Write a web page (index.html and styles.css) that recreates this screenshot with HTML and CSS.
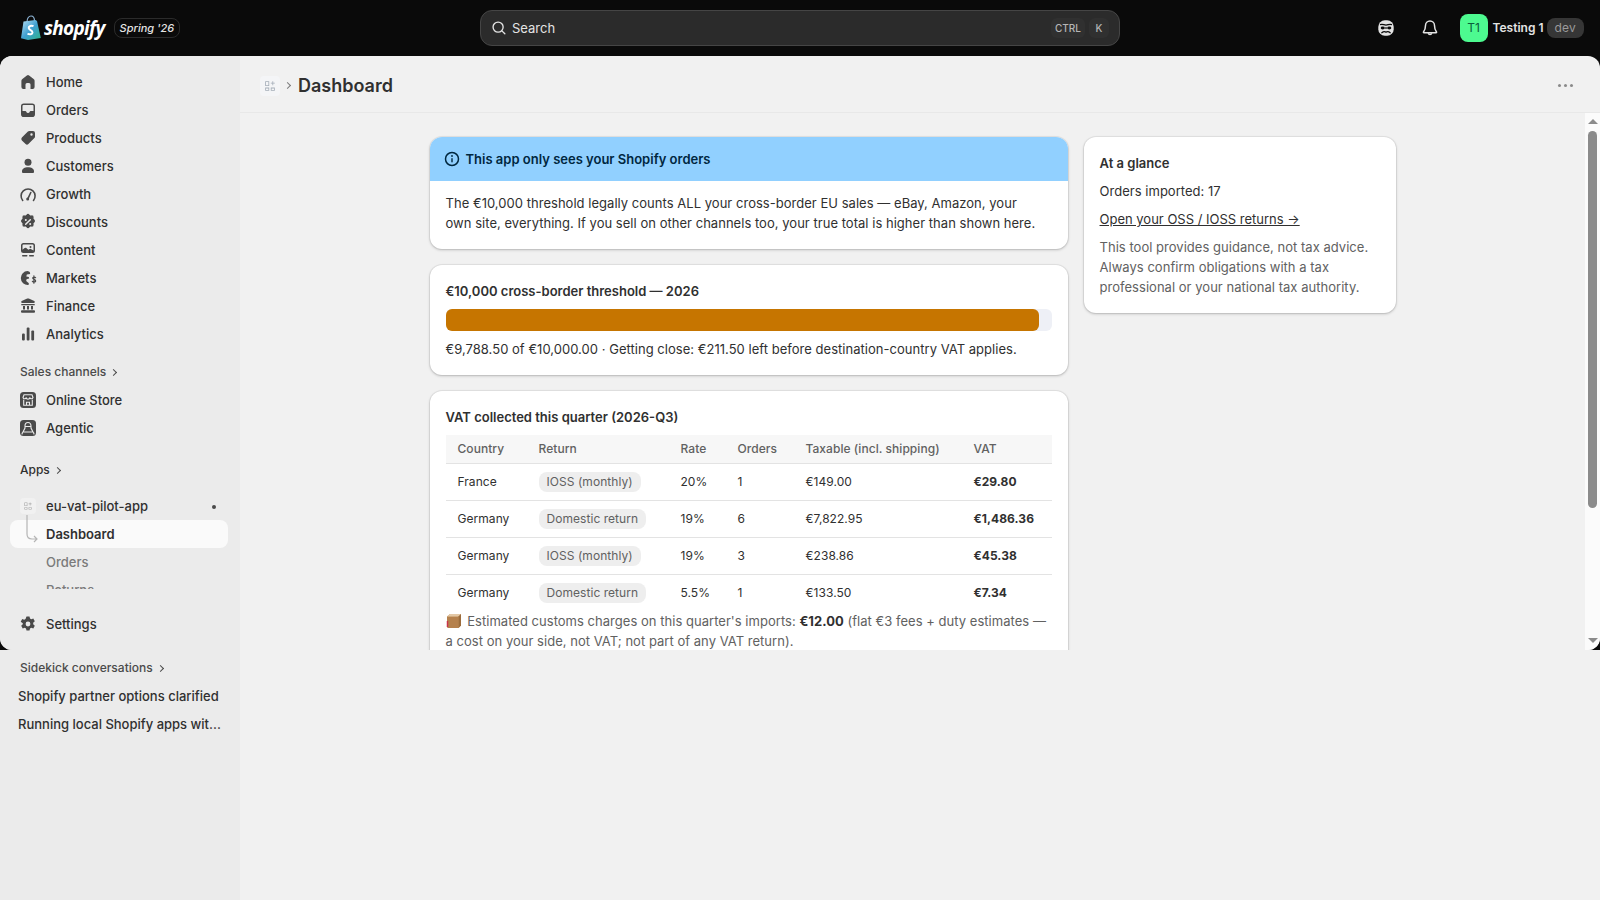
FILE: index.html
```html
<!DOCTYPE html>
<html lang="en">
<head>
    <meta charset="UTF-8">
    <meta name="viewport" content="width=device-width, initial-scale=1.0">
    <title>Dashboard - eu-vat-pilot-app</title>
    <link rel="stylesheet" href="styles.css">
</head>
<body>
    <div class="upper">
        <header class="topbar">
            <div class="brand">
                <svg class="bag" viewBox="0 0 22 26" width="22" height="26">
                    <defs>
                        <linearGradient id="bagFill" x1="0" y1="0" x2="1" y2="1">
                            <stop offset="0" stop-color="#b9e0f5"/>
                            <stop offset="0.5" stop-color="#3f9fd0"/>
                            <stop offset="1" stop-color="#2fb58a"/>
                        </linearGradient>
                    </defs>
                    <path d="M7 7C7 3 9 1 11 1s3.500 2 3.500 5" fill="none" stroke="#8fb6d8" stroke-width="1.200"/>
                    <path d="M3.500 6.500 15.500 5 17 6l3.800 17L8 25 1 23.300Z" fill="url(#bagFill)"/>
                    <path d="M13.500 11.200C11.500 10.300 8.500 11 8.700 13c.2 2 3.800 2.200 3.800 4.400 0 2-2.800 2.400-5 1.200" fill="none" stroke="#fff" stroke-width="2"/>
                </svg>
                <span class="wordmark">shopify</span>
                <span class="edition">Spring '26</span>
            </div>
            <div class="search">
                <svg viewBox="0 0 20 20" width="18" height="18"><circle cx="9" cy="9" r="5.600" fill="none" stroke="#e3e3e3" stroke-width="1.500"/><path d="m13.200 13.200 3.300 3.300" stroke="#e3e3e3" stroke-width="1.500" stroke-linecap="round"/></svg>
                <span class="search-label">Search</span>
                <kbd class="key key-wide">CTRL</kbd>
                <kbd class="key">K</kbd>
            </div>
            <div class="top-actions">
                <svg class="top-icon" viewBox="0 0 20 20" width="20" height="20">
                    <rect x="2.300" y="2.300" width="15.400" height="15.400" rx="6.500" fill="#e3e3e3"/>
                    <path d="M4.500 6.600c2-.9 3.500.6 5.500.6s3.500-1.500 5.500-.6" fill="none" stroke="#0a0a0a" stroke-width="1.300" stroke-linecap="round"/>
                    <ellipse cx="6.700" cy="10" rx="2" ry="1.400" fill="#0a0a0a"/>
                    <ellipse cx="13.300" cy="10" rx="2" ry="1.400" fill="#0a0a0a"/>
                    <path d="M8.500 10h3" stroke="#0a0a0a" stroke-width="1.200"/>
                    <path d="M5.800 14.700c1.800-1.500 3-1.300 4.200-.6 1.200-.7 2.400-.9 4.200.6" fill="none" stroke="#0a0a0a" stroke-width="1.300" stroke-linecap="round"/>
                </svg>
                <svg class="top-icon bell" viewBox="0 0 20 20" width="20" height="20">
                    <path d="M10 3a4.500 4.500 0 0 0-4.500 4.500c0 3.200-.6 4.700-2 6.400-.3.400 0 .9.400.9h12.200c.4 0 .7-.5.4-.9-1.400-1.700-2-3.200-2-6.400A4.500 4.500 0 0 0 10 3Z" fill="none" stroke="#e3e3e3" stroke-width="1.500" stroke-linejoin="round"/>
                    <path d="M8.200 15.200a1.900 1.900 0 0 0 3.600 0" fill="none" stroke="#e3e3e3" stroke-width="1.500"/>
                </svg>
                <span class="avatar">T1</span>
                <span class="store-name">Testing 1</span>
                <span class="dev-tag">dev</span>
            </div>
        </header>

        <div class="frame">
            <nav class="sidebar">
                <div class="nav-scroll">
                    <a class="nav-item" href="#">
                        <svg viewBox="0 0 20 20"><path d="M8.900 3.400 4.400 6.900a2.500 2.500 0 0 0-1 1.900V15a2 2 0 0 0 2 2h2.100v-4.500A1.500 1.500 0 0 1 9 11h2a1.500 1.500 0 0 1 1.500 1.500V17h2.100a2 2 0 0 0 2-2V8.800a2.500 2.500 0 0 0-1-1.900l-4.500-3.500a1.800 1.800 0 0 0-2.200 0Z"/></svg>
                        Home
                    </a>
                    <a class="nav-item" href="#">
                        <svg viewBox="0 0 20 20"><path fill-rule="evenodd" d="M5.800 3.500h8.400A2.800 2.800 0 0 1 17 6.300v7.900a2.800 2.800 0 0 1-2.800 2.800H5.800A2.800 2.800 0 0 1 3 14.200V6.300a2.800 2.800 0 0 1 2.800-2.800ZM5.500 5a1 1 0 0 0-1 1v5h2.800a1 1 0 0 1 1 .8 1.800 1.800 0 0 0 3.400 0 1 1 0 0 1 1-.8h2.800V6a1 1 0 0 0-1-1h-9Z"/></svg>
                        Orders
                    </a>
                    <a class="nav-item" href="#">
                        <svg viewBox="0 0 20 20"><path fill-rule="evenodd" d="M11.300 3H15a2 2 0 0 1 2 2v3.700a2 2 0 0 1-.6 1.400l-6 6a2 2 0 0 1-2.800 0l-3.700-3.700a2 2 0 0 1 0-2.800l6-6A2 2 0 0 1 11.300 3Zm2.200 2.300a1.200 1.200 0 1 0 0 2.400 1.200 1.200 0 0 0 0-2.400Z"/></svg>
                        Products
                    </a>
                    <a class="nav-item" href="#">
                        <svg viewBox="0 0 20 20"><circle cx="10" cy="6.200" r="3.500"/><path d="M4 15.300c0-2.500 2.600-4 6-4s6 1.500 6 4v.7a1 1 0 0 1-1 1H5a1 1 0 0 1-1-1Z"/></svg>
                        Customers
                    </a>
                    <a class="nav-item" href="#">
                        <svg viewBox="0 0 20 20"><path class="line" d="M4.700 16.500a7 7 0 1 1 10.800 0"/><path class="line" d="m9.800 14.800 3-6.300"/><circle cx="9.700" cy="15" r="1.500"/></svg>
                        Growth
                    </a>
                    <a class="nav-item" href="#">
                        <svg viewBox="0 0 20 20"><path d="M8.500 2.700a2 2 0 0 1 3 0l.8.800 1.100-.1a2 2 0 0 1 2.200 2.200l-.1 1.100.8.800a2 2 0 0 1 0 3l-.8.800.1 1.100a2 2 0 0 1-2.200 2.200l-1.100-.1-.8.800a2 2 0 0 1-3 0l-.8-.8-1.100.1a2 2 0 0 1-2.200-2.200l.1-1.100-.8-.8a2 2 0 0 1 0-3l.8-.8-.1-1.100a2 2 0 0 1 2.200-2.200l1.100.1Z"/><path class="cut" d="m7.700 12.300 4.600-4.600"/><circle class="hole" cx="7.800" cy="8" r="1"/><circle class="hole" cx="12.200" cy="12" r="1"/></svg>
                        Discounts
                    </a>
                    <a class="nav-item" href="#">
                        <svg viewBox="0 0 20 20"><path fill-rule="evenodd" d="M5.500 3h9A2.500 2.500 0 0 1 17 5.500v5a2.500 2.500 0 0 1-2.500 2.500h-9A2.500 2.500 0 0 1 3 10.500v-5A2.500 2.500 0 0 1 5.500 3Zm-1 6.800c1.500-1.600 2.800-2.400 3.500-2l2.300 2 2-1 3.200 1.800V5.500a1 1 0 0 0-1-1h-9a1 1 0 0 0-1 1Zm8-3.800a1 1 0 1 0 0 2 1 1 0 0 0 0-2Z"/><rect x="4" y="15" width="5.500" height="1.500" rx=".7"/><rect x="11" y="15" width="5" height="1.500" rx=".7"/></svg>
                        Content
                    </a>
                    <a class="nav-item" href="#">
                        <svg viewBox="0 0 20 20"><path d="M9.500 3a7 7 0 0 0-6.700 7 7 7 0 0 0 7.700 7l.4-1.400c-.6-1.200-1.800-1.400-2.400-2.300-.6-1-.2-2 .7-2.300l2-.6-.4-1.400-2.500-.6.500-2 3.300-.5c.1-1.400-.2-2.400-2.600-2.900Z"/><path class="line thin" d="M17.600 9.700c-.5-.8-2.800-1-2.900.4-.1 1.500 3 1.100 3 2.800 0 1.400-2.500 1.300-3.300.4M15.900 7.800v7.400"/></svg>
                        Markets
                    </a>
                    <a class="nav-item" href="#">
                        <svg viewBox="0 0 20 20"><path d="M9.200 2.600a2 2 0 0 1 1.600 0l5.500 2.400c.8.400.6 2-.4 2H4.100c-1 0-1.200-1.600-.4-2Z"/><rect x="3.200" y="8" width="13.600" height="1.300" rx=".4"/><rect x="5" y="10" width="2" height="3.500"/><rect x="9" y="10" width="2" height="3.500"/><rect x="13" y="10" width="2" height="3.500"/><rect x="3" y="14.200" width="14" height="2.600" rx="1"/></svg>
                        Finance
                    </a>
                    <a class="nav-item" href="#">
                        <svg viewBox="0 0 20 20"><rect x="4" y="9.500" width="2.800" height="7" rx="1"/><rect x="8.700" y="3.500" width="2.800" height="13" rx="1"/><rect x="13.300" y="6.500" width="2.800" height="10" rx="1"/></svg>
                        Analytics
                    </a>

                    <div class="nav-heading nav-heading-sales">Sales channels <span class="chevron"></span></div>
                    <a class="nav-item" href="#">
                        <svg viewBox="0 0 20 20"><rect x="2" y="2" width="16" height="16" rx="3.500"/><path class="cut thin" d="M5 7.500 6 4.800h8l1 2.700M5 7.500a1.700 1.700 0 0 0 3.300 0 1.700 1.700 0 0 0 3.400 0 1.700 1.700 0 0 0 3.300 0M5.700 10v5.300h8.600V10M8.500 15.300v-3h3v3"/></svg>
                        Online Store
                    </a>
                    <a class="nav-item" href="#">
                        <svg viewBox="0 0 20 20"><rect x="2" y="2" width="16" height="16" rx="3.500"/><path class="cut thin" d="M10 4.500c-2 0-3 1.500-3 3.500v2l-2 4h10l-2-4V8c0-2-1-3.500-3-3.500ZM4.500 14.500l-.5 1.500M15.500 14.500l.5 1.500M7.500 8.500h5"/></svg>
                        Agentic
                    </a>

                    <div class="nav-heading nav-heading-apps">Apps <span class="chevron"></span></div>
                    <a class="nav-item app-row" href="#">
                        <span class="app-icon"><svg viewBox="0 0 20 20"><path fill-rule="evenodd" d="M4 4h5v6H4Zm1 1v4h3V5ZM4 12h5v4H4Zm1 1v2h3v-2Zm6-1h5v4h-5Zm1 1v2h3v-2ZM13 4h1v2h2v1h-2v2h-1V7h-2V6h2Z"/></svg></span>
                        eu-vat-pilot-app
                        <span class="pin-dot"></span>
                    </a>
                    <a class="nav-item sub-item active" href="#">
                        <svg class="tree" viewBox="0 0 20 32"><path d="M9 1v19q0 5 5 5h5M16 22l3 3-3 3"/></svg>
                        Dashboard
                    </a>
                    <a class="nav-item sub-item" href="#">Orders</a>
                    <a class="nav-item sub-item" href="#">Returns</a>
                </div>
                <a class="nav-item settings" href="#">
                    <svg viewBox="0 0 20 20"><path fill-rule="evenodd" d="M8.500 2.500h3l.5 2.100 1.300.7 2-.7 1.500 2.600-1.600 1.500v1.600l1.600 1.500-1.500 2.600-2-.7-1.300.7-.5 2.100h-3l-.5-2.100-1.300-.7-2 .7-1.500-2.600 1.600-1.500V9.200L2.700 7.700l1.500-2.600 2 .7L7.500 5ZM10 7.600a2.400 2.400 0 1 0 0 4.800 2.400 2.400 0 0 0 0-4.800Z"/></svg>
                    Settings
                </a>
            </nav>

            <main class="main">
                <div class="page-header">
                    <span class="crumb-icon"><svg viewBox="0 0 20 20"><path d="M4 4h5v6H4Zm1 1v4h3V5ZM4 12h5v4H4Zm1 1v2h3v-2Zm6-1h5v4h-5Zm1 1v2h3v-2ZM13 4h1v2h2v1h-2v2h-1V7h-2V6h2Z" fill-rule="evenodd"/></svg></span>
                    <span class="crumb-chevron"></span>
                    <h1>Dashboard</h1>
                    <span class="more-dots"><i></i><i></i><i></i></span>
                </div>
                <div class="body-row">
                    <div class="pane">
                        <div class="layout">
                            <div class="column">
                                <section class="card notice">
                                    <div class="notice-head">
                                        <svg viewBox="0 0 20 20" width="20" height="20"><circle cx="10" cy="10" r="6.500" fill="none" stroke="#00273f" stroke-width="1.500"/><rect x="9.300" y="9" width="1.400" height="4.500" rx=".7" fill="#00273f"/><circle cx="10" cy="7" r=".9" fill="#00273f"/></svg>
                                        This app only sees your Shopify orders
                                    </div>
                                    <p class="notice-body">The €10,000 threshold legally counts ALL your cross-border EU sales — eBay, Amazon, your own site, everything. If you sell on other channels too, your true total is higher than shown here.</p>
                                </section>

                                <section class="card">
                                    <h2>€10,000 cross-border threshold — 2026</h2>
                                    <div class="bar"><div class="bar-fill" style="width: 97.885%"></div></div>
                                    <p>€9,788.50 of €10,000.00 · Getting close: €211.50 left before destination-country VAT applies.</p>
                                </section>

                                <section class="card">
                                    <h2>VAT collected this quarter (2026-Q3)</h2>
                                    <table class="vat-table">
                                        <thead>
                                            <tr><th>Country</th><th>Return</th><th>Rate</th><th>Orders</th><th>Taxable (incl. shipping)</th><th>VAT</th></tr>
                                        </thead>
                                        <tbody>
                                            <tr><td>France</td><td><span class="badge">IOSS (monthly)</span></td><td>20%</td><td>1</td><td>€149.00</td><td class="vat">€29.80</td></tr>
                                            <tr><td>Germany</td><td><span class="badge">Domestic return</span></td><td>19%</td><td>6</td><td>€7,822.95</td><td class="vat">€1,486.36</td></tr>
                                            <tr><td>Germany</td><td><span class="badge">IOSS (monthly)</span></td><td>19%</td><td>3</td><td>€238.86</td><td class="vat">€45.38</td></tr>
                                            <tr><td>Germany</td><td><span class="badge">Domestic return</span></td><td>5.5%</td><td>1</td><td>€133.50</td><td class="vat">€7.34</td></tr>
                                        </tbody>
                                    </table>
                                    <p class="muted customs">
                                        <svg class="box-icon" viewBox="0 0 16 16" width="16" height="16"><path d="M1 3.500 4 1h11v11.500L12.500 15H2.500L1 13.500Z" fill="#c99a66"/><path d="M1 3.500h11.500V15H2.500Q1 15 1 13.500Z" fill="#b5814d"/><path d="M1 3.500 4 1h11l-2.500 2.500Z" fill="#e3c8a6"/><path d="M12.500 3.500 15 1v11.500L12.500 15Z" fill="#9c6c3c"/><path d="M1.500 8v6" stroke="#c9344a" stroke-width="1.500"/></svg>
                                        Estimated customs charges on this quarter's imports: <strong>€12.00</strong> (flat €3 fees + duty estimates — a cost on your side, not VAT; not part of any VAT return).
                                    </p>
                                </section>
                            </div>

                            <aside class="card side-card">
                                <h2>At a glance</h2>
                                <p>Orders imported: 17</p>
                                <a class="returns-link" href="#">Open your OSS / IOSS returns →</a>
                                <p class="muted">This tool provides guidance, not tax advice. Always confirm obligations with a tax professional or your national tax authority.</p>
                            </aside>
                        </div>
                    </div>
                    <div class="scrollbar">
                        <span class="arrow-up"></span>
                        <span class="thumb"></span>
                        <span class="arrow-down"></span>
                    </div>
                </div>
            </main>
        </div>
    </div>

    <div class="lower">
        <div class="sidekick">
            <div class="nav-heading">Sidekick conversations <span class="chevron"></span></div>
            <a class="chat-item" href="#">Shopify partner options clarified</a>
            <a class="chat-item" href="#">Running local Shopify apps wit...</a>
        </div>
    </div>
</body>
</html>
```

FILE: styles.css
```css
* {
    box-sizing: border-box;
}
html, body {
    height: 100%;
}
body {
    margin: 0;
    overflow: hidden;
    font-family: Inter, "Liberation Sans", sans-serif;
    font-size: 13px;
    line-height: 20px;
    color: #303030;
    background-color: #f1f1f1;
}
a {
    color: inherit;
    text-decoration: none;
}
h1, h2, p {
    margin: 0;
}

/* Top bar */
.upper {
    background-color: #0a0a0a;
}
.topbar {
    height: 56px;
    display: flex;
    align-items: center;
    padding: 0 16px 0 20px;
}
.brand {
    width: 460px;
    display: flex;
    align-items: center;
}
.wordmark {
    margin-left: 2px;
    font-family: "Open Sans", sans-serif;
    font-size: 19px;
    font-weight: 700;
    font-style: italic;
    letter-spacing: -0.7px;
    color: #fff;
}
.edition {
    margin-left: 9px;
    height: 20px;
    padding: 0 5px;
    border: 1px solid #2b2b2b;
    border-radius: 8px;
    font-size: 11px;
    line-height: 18px;
    font-style: italic;
    font-weight: 500;
    color: #e3e3e3;
}
.search {
    width: 640px;
    height: 36px;
    display: flex;
    align-items: center;
    padding: 0 10px 0 9px;
    gap: 4px;
    background-color: #2b2b2b;
    border: 1px solid #454545;
    border-radius: 12px;
}
.search-label {
    flex: 1;
    color: #e3e3e3;
}
.key {
    width: 20px;
    height: 20px;
    border-radius: 6px;
    background-color: #303030;
    color: #b5b5b5;
    font-family: Inter, sans-serif;
    font-size: 10px;
    font-weight: 500;
    line-height: 20px;
    text-align: center;
}
.key-wide {
    width: 34px;
}
.top-actions {
    flex: 1;
    display: flex;
    align-items: center;
}
.top-icon {
    margin-left: auto;
}
.top-icon.bell {
    margin-left: 24px;
    margin-right: 20px;
}
.avatar {
    width: 28px;
    height: 28px;
    border-radius: 8px;
    background-color: #4dfa90;
    color: #0a5c3b;
    font-size: 12px;
    line-height: 28px;
    text-align: center;
}
.store-name {
    margin-left: 5px;
    font-size: 12px;
    font-weight: 600;
    color: #e3e3e3;
    white-space: nowrap;
}
.dev-tag {
    margin-left: 3px;
    height: 20px;
    padding: 0 8px;
    border-radius: 8px;
    background-color: #363636;
    color: #9a9a9a;
    font-size: 12px;
    letter-spacing: 0.2px;
}

/* Frame with rounded corners */
.frame {
    height: 594px;
    display: flex;
    border-radius: 12px;
    overflow: hidden;
    background-color: #f1f1f1;
}
.sidebar {
    width: 240px;
    display: flex;
    flex-direction: column;
    background-color: #ebebeb;
}
.nav-scroll {
    height: 533px;
    padding-top: 12px;
    overflow: hidden;
}
.nav-item {
    height: 28px;
    margin: 0 12px 0 10px;
    padding-left: 8px;
    display: flex;
    align-items: center;
    gap: 8px;
    font-weight: 500;
    color: #303030;
    border-radius: 8px;
}
.nav-item svg {
    width: 20px;
    height: 20px;
    flex-shrink: 0;
    fill: #4a4a4a;
}
.nav-item svg .line {
    fill: none;
    stroke: #4a4a4a;
    stroke-width: 1.6;
    stroke-linecap: round;
}
.nav-item svg .thin {
    stroke-width: 1.2;
}
.nav-item svg .cut {
    fill: none;
    stroke: #ebebeb;
    stroke-width: 1.5;
    stroke-linecap: round;
}
.nav-item svg .cut.thin {
    stroke-width: 1.1;
}
.nav-item svg .hole {
    fill: #ebebeb;
}
.nav-heading {
    height: 24px;
    padding-left: 20px;
    display: flex;
    align-items: center;
    gap: 5px;
    font-size: 12px;
    font-weight: 500;
    color: #4a4a4a;
}
.nav-heading-sales {
    margin-top: 12px;
    margin-bottom: 2px;
}
.nav-heading-apps {
    margin-top: 16px;
    margin-bottom: 10px;
    color: #303030;
}
.chevron {
    width: 5px;
    height: 5px;
    border-top: 1px solid #4a4a4a;
    border-right: 1px solid #4a4a4a;
    transform: rotate(45deg);
}
.app-row {
    position: relative;
}
.app-icon {
    width: 16px;
    height: 16px;
    margin: 0 2px;
    padding: 2px;
    border-radius: 4px;
    background-color: #f1f1f1;
    display: flex;
}
.app-icon svg {
    width: 12px;
    height: 12px;
    fill: #a8a8a8;
}
.pin-dot {
    position: absolute;
    right: 12px;
    top: 13px;
    width: 4px;
    height: 4px;
    border-radius: 50%;
    background-color: #4a4a4a;
}
.sub-item {
    position: relative;
    padding-left: 36px;
    color: #7a7a7a;
}
.sub-item.active {
    background-color: #fafafa;
    color: #303030;
    font-weight: 600;
}
.tree {
    position: absolute;
    left: 8px;
    top: -6px;
    width: 20px !important;
    height: 32px !important;
    fill: none !important;
    stroke: #b5b5b5;
    stroke-width: 1.2;
}
.settings {
    margin-top: 21px;
}

/* Main area */
.main {
    flex: 1;
    min-width: 0;
    display: flex;
    flex-direction: column;
}
.page-header {
    height: 57px;
    flex-shrink: 0;
    display: flex;
    align-items: center;
    padding: 3px 27px 0 20px;
    border-bottom: 1px solid #e8e8e8;
}
.crumb-icon {
    width: 20px;
    height: 20px;
    padding: 2px;
    border-radius: 4px;
    background-color: #f4f5f7;
    display: flex;
}
.crumb-icon svg {
    width: 16px;
    height: 16px;
    fill: #a4adb8;
}
.crumb-chevron {
    width: 5px;
    height: 5px;
    margin: 0 8px 0 5px;
    border-top: 1px solid #7a7a7a;
    border-right: 1px solid #7a7a7a;
    transform: rotate(45deg);
}
.page-header h1 {
    flex: 1;
    font-size: 18px;
    line-height: 24px;
    font-weight: 600;
    color: #303030;
}
.more-dots {
    display: flex;
    gap: 3px;
}
.more-dots i {
    width: 3px;
    height: 3px;
    border-radius: 50%;
    background-color: #8a8a8a;
}
.body-row {
    flex: 1;
    min-height: 0;
    display: flex;
}
.pane {
    flex: 1;
    min-width: 0;
    overflow: hidden;
    padding: 24px 0 0 189.5px;
}
.layout {
    display: grid;
    grid-template-columns: 638px 312px;
    gap: 16px;
    align-items: start;
}
.column {
    display: flex;
    flex-direction: column;
    gap: 16px;
}
.card {
    padding: 16px;
    background-color: #fff;
    border-radius: 12px;
    box-shadow: 0 0 0 1px rgba(0, 0, 0, 0.05), 0 1px 3px rgba(0, 0, 0, 0.22);
}
.card p {
    letter-spacing: 0.03px;
}
.card h2 {
    font-size: 13px;
    line-height: 20px;
    font-weight: 600;
    margin-bottom: 8px;
}
.notice {
    padding: 0;
    overflow: hidden;
}
.notice-head {
    height: 44px;
    padding: 0 12px;
    display: flex;
    align-items: center;
    gap: 4px;
    background-color: #91d0ff;
    color: #00273f;
    font-weight: 600;
}
.notice-body {
    max-width: 622px;
    padding: 12px 16px 16px;
}
.bar {
    height: 22px;
    margin-bottom: 8px;
    border-radius: 6px;
    background-color: #eef0f6;
}
.bar-fill {
    height: 100%;
    border-radius: 6px;
    background-color: #c67500;
}
.vat-table {
    width: 100%;
    table-layout: fixed;
    border-collapse: separate;
    border-spacing: 0;
    font-size: 12px;
    letter-spacing: 0.05px;
}
.vat-table th, .vat-table td {
    padding: 0 12px;
    text-align: left;
}
.vat-table th {
    height: 29px;
    background-color: #f7f7f7;
    border-bottom: 1px solid #e3e3e3;
    color: #616161;
    font-weight: 500;
}
.vat-table td {
    height: 37px;
    border-bottom: 1px solid #e3e3e3;
}
.vat-table tr:last-child td {
    height: 36px;
    border-bottom: none;
}
.vat-table th:nth-child(1) { width: 81px; }
.vat-table th:nth-child(2) { width: 142px; }
.vat-table th:nth-child(3) { width: 57px; }
.vat-table th:nth-child(4) { width: 68px; }
.vat-table th:nth-child(5) { width: 168px; }
.vat-table td.vat {
    font-weight: 700;
}
.vat-table td:nth-child(2) {
    padding-right: 0;
}
.badge {
    display: inline-block;
    height: 20px;
    padding: 0 8px;
    border-radius: 8px;
    background-color: #eeeeee;
    color: #616161;
    line-height: 20px;
    white-space: nowrap;
}
.muted {
    color: #616161;
}
.customs strong {
    color: #303030;
}
.box-icon {
    vertical-align: -3px;
    margin-right: 2px;
}
.side-card p {
    margin-bottom: 8px;
}
.side-card h2 {
    margin-bottom: 8px;
}
.side-card .muted {
    margin-bottom: 0;
}
.returns-link {
    display: block;
    margin-bottom: 8px;
    text-decoration: underline;
}

/* Scrollbar */
.scrollbar {
    width: 15px;
    flex-shrink: 0;
    display: flex;
    flex-direction: column;
    align-items: center;
    background-color: #fbfbfb;
}
.arrow-up, .arrow-down {
    width: 0;
    height: 0;
    border-left: 5px solid transparent;
    border-right: 5px solid transparent;
}
.arrow-up {
    margin-top: 6px;
    border-bottom: 5px solid #8b8b8b;
}
.arrow-down {
    margin-top: auto;
    margin-bottom: 7px;
    border-top: 5px solid #8b8b8b;
}
.thumb {
    width: 9px;
    height: 377px;
    margin-top: 7px;
    border-radius: 5px;
    background-color: #8b8b8b;
}

/* Below the frame */
.lower {
    height: 250px;
}
.sidekick {
    width: 240px;
    height: 100%;
    padding-top: 6px;
    background-color: #ebebeb;
}
.sidekick .nav-heading {
    margin-bottom: 2px;
}
.chat-item {
    display: block;
    height: 28px;
    padding-left: 18px;
    font-weight: 500;
    line-height: 28px;
}
```
